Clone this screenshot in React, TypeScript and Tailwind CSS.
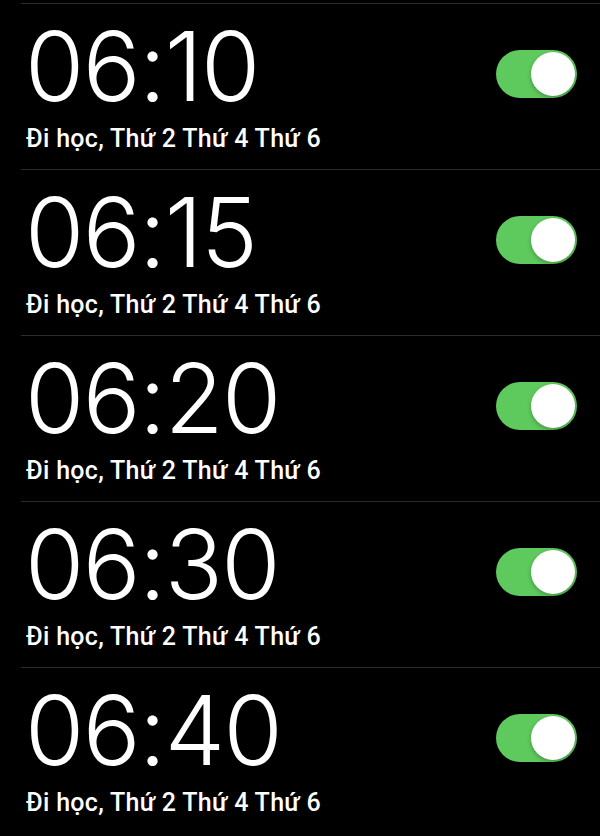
import React from "react";

const times = ["06:10", "06:15", "06:20", "06:30", "06:40"];

function Toggle() {
  return (
    <div className="relative h-[48px] w-[81px] rounded-full bg-[#5ec95d]">
      <div className="absolute right-[2px] top-[2px] h-[44px] w-[44px] rounded-full bg-white shadow-[0_2px_4px_rgba(0,0,0,0.25)]" />
    </div>
  );
}

export default function App() {
  return (
    <div className="h-[836px] w-[600px] overflow-hidden bg-black pl-[21px] pt-[3px]">
      {times.map((t) => (
        <div key={t} className="flex h-[166px] items-start justify-between border-t border-[#2a2a2a] pr-[23px]">
          <div className="flex flex-col pl-[4px]">
            <div
              className="mt-[14px] text-[96px] font-light leading-none tracking-[-1.5px] text-white"
              style={{ fontFamily: "Inter, 'Liberation Sans', sans-serif" }}
            >
              {t}
            </div>
            <div
              className="mt-[12px] pl-[1px] text-[25px] font-medium leading-none tracking-[0.3px] text-white"
              style={{ fontFamily: "Roboto, 'Noto Sans', sans-serif" }}
            >
              Đi học, Thứ 2 Thứ 4 Thứ 6
            </div>
          </div>
          <div className="mt-[46px]">
            <Toggle />
          </div>
        </div>
      ))}
    </div>
  );
}
